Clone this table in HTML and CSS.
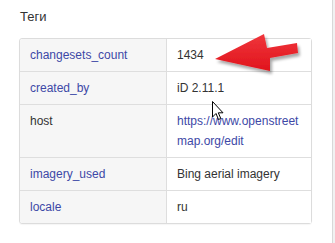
FILE: index.html
```html
<!DOCTYPE html>
<html>
<head>
<meta charset="utf-8">
<link rel="stylesheet" href="styles.css">
</head>
<body>
<div class="page">
  <main class="main">
    <h4 class="title">Теги</h4>
    <table class="tags">
      <tr><th><a href="#">changesets_count</a></th><td>1434</td></tr>
      <tr><th><a href="#">created_by</a></th><td>iD 2.11.1</td></tr>
      <tr><th>host</th><td><a href="#">https://www.openstreet map.org/edit</a></td></tr>
      <tr><th><a href="#">imagery_used</a></th><td>Bing aerial imagery</td></tr>
      <tr><th><a href="#">locale</a></th><td>ru</td></tr>
    </table>
    <svg class="arrow" width="100" height="50" viewBox="0 0 100 50">
      <defs>
        <filter id="sh" x="-20%" y="-20%" width="150%" height="160%">
          <feGaussianBlur in="SourceAlpha" stdDeviation="1.5"/>
          <feOffset dx="2" dy="3" result="b"/>
          <feComponentTransfer><feFuncA type="linear" slope="0.35"/></feComponentTransfer>
          <feMerge><feMergeNode/><feMergeNode in="SourceGraphic"/></feMerge>
        </filter>
        <linearGradient id="rg" x1="0" y1="0" x2="0" y2="1">
          <stop offset="0" stop-color="#f0363c"/>
          <stop offset="1" stop-color="#e0141c"/>
        </linearGradient>
      </defs>
      <path d="M5 29 L54 4 L57 18 L87 13 L88 23 L60 28 L60 41 Z" fill="url(#rg)" filter="url(#sh)"/>
    </svg>
    <svg class="cursor" width="13" height="20" viewBox="0 0 13 20">
      <path d="M0.5 0.5 L0.5 16 L4 12.5 L6.5 18.5 L8.8 17.5 L6.3 11.8 L11 11.8 Z" fill="#fff" stroke="#000" stroke-width="1" stroke-linejoin="miter"/>
    </svg>
  </main>
  <div class="scrollbar"></div>
</div>
</body>
</html>
```

FILE: styles.css
```css
html, body {
  margin: 0;
  padding: 0;
  background: #fff;
}
.page {
  display: flex;
  width: 335px;
  height: 243px;
  overflow: hidden;
}
.main {
  position: relative;
  flex: 1;
  padding: 7px 0 0 19px;
  font-family: "Liberation Sans", Arial, sans-serif;
  font-size: 12px;
  color: #333;
}
.title {
  margin: 0 0 11px 1px;
  font-size: 13px;
  font-weight: normal;
  line-height: 20px;
  color: #333;
}
.tags {
  width: 293px;
  border-collapse: separate;
  border-spacing: 0;
  border: 1px solid #dcdcdc;
  border-radius: 3px;
  box-shadow: 0 1px 1px rgba(0,0,0,0.04);
  table-layout: fixed;
}
.tags th, .tags td {
  padding: 6px 10px;
  line-height: 20px;
  text-align: left;
  font-weight: normal;
  vertical-align: top;
  border-top: 1px solid #dedede;
}
.tags tr:first-child th, .tags tr:first-child td {
  border-top: none;
}
.tags th {
  width: 126px;
  background: #f6f6f6;
  border-right: 1px solid #dedede;
  border-radius: 0;
}
.tags tr:last-child th { border-bottom-left-radius: 3px; }
.tags tr:first-child th { border-top-left-radius: 3px; }
.tags td {
  background: #fff;
  color: #333;
}
.tags a {
  color: #3d48a6;
  text-decoration: none;
}
.arrow {
  position: absolute;
  left: 210px;
  top: 30px;
}
.cursor {
  position: absolute;
  left: 212px;
  top: 101px;
}
.scrollbar {
  width: 2px;
  flex: none;
  border-left: 1px solid #d8d8d8;
  background: #f1f1f1;
}
```
